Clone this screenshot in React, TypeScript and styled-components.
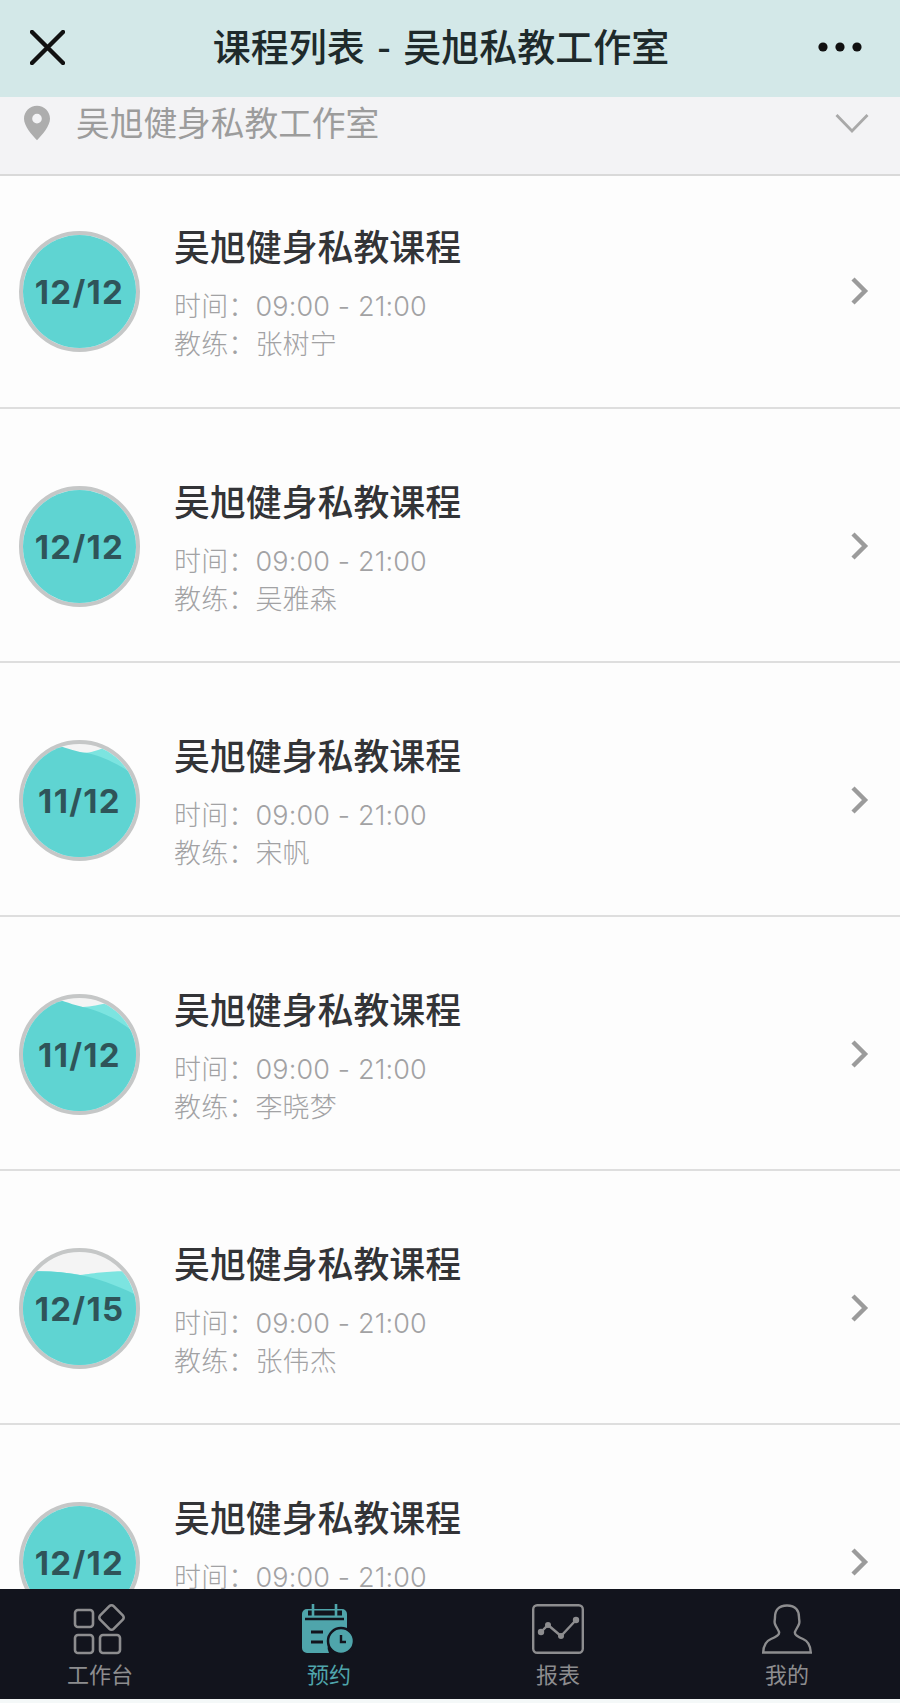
import React from "react";
import styled, { createGlobalStyle } from "styled-components";

const Global = createGlobalStyle`
  html, body { margin: 0; padding: 0; background: #fdfdfd; }
  body { font-family: "Noto Sans CJK SC", "Liberation Sans", sans-serif; }
  * { box-sizing: border-box; }
`;

const Page = styled.div`
  width: 900px;
  height: 1703px;
  display: flex;
  flex-direction: column;
  overflow: hidden;
  background: #fdfdfd;
`;

const NavBar = styled.header`
  height: 97px;
  flex: none;
  display: flex;
  align-items: center;
  justify-content: space-between;
  padding: 0 38px 3px 30px;
  background: #d3e8e8;
`;

const NavTitle = styled.h1`
  margin: 0 0 4px -1px;
  font-size: 38px;
  line-height: 50px;
  font-weight: 500;
  word-spacing: 4px;
  color: #1e2a2b;
  white-space: pre;
`;

const LocationBar = styled.div`
  height: 79px;
  flex: none;
  display: flex;
  align-items: flex-start;
  padding: 5px 31px 0 24px;
  background: #f3f3f5;
  border-bottom: 2px solid #d9d9d9;
`;

const LocationName = styled.span`
  margin-left: 26px;
  font-size: 33.7px;
  line-height: 40px;
  font-weight: 400;
  color: #9c9c9c;
`;

const LocationChevron = styled.span`
  margin-left: auto;
  margin-top: 11px;
  display: flex;
`;

const PinIcon = styled.svg`
  margin-top: 3px;
  flex: none;
`;

const List = styled.main`
  flex: 1;
  min-height: 0;
  overflow: hidden;
`;

const Row = styled.article<{ $first?: boolean }>`
  height: ${(p) => (p.$first ? 233 : 254)}px;
  display: flex;
  align-items: flex-start;
  padding: ${(p) => (p.$first ? 55 : 77)}px 31px 0 19px;
  border-bottom: 2px solid #dedede;
`;

const Gauge = styled.div`
  position: relative;
  width: 121px;
  height: 121px;
  flex: none;
  display: flex;
  align-items: center;
  justify-content: center;
  border: 4px solid #c5c7c7;
  border-radius: 50%;
  overflow: hidden;
  background: #f4f4f4;
`;

const GaugeWater = styled.svg`
  position: absolute;
  inset: 0;
  width: 113px;
  height: 113px;
`;

const GaugeLabel = styled.span`
  position: relative;
  font-family: "Inter", "Liberation Sans", sans-serif;
  font-size: 33px;
  line-height: 40px;
  font-weight: 700;
  letter-spacing: 1.3px;
  color: #2f5459;
`;

const Info = styled.div`
  margin-left: 34px;
  display: flex;
  flex-direction: column;
`;

const CourseTitle = styled.h2`
  margin: -9px 0 0;
  font-size: 35.9px;
  line-height: 46px;
  font-weight: 500;
  color: #333437;
`;

const Meta = styled.p`
  margin: 0;
  font-family: "Inter", "Noto Sans CJK SC", sans-serif;
  font-size: 27px;
  line-height: 38px;
  font-weight: 300;
  letter-spacing: 0.15px;
  color: #a2a2a4;
  white-space: pre;
`;

const MetaList = styled.div`
  margin-top: 20px;
  display: flex;
  flex-direction: column;
`;

const RowChevron = styled.span`
  margin-left: auto;
  height: 120px;
  display: flex;
  align-items: center;
`;

const TabBar = styled.nav`
  height: 110px;
  flex: none;
  display: flex;
  justify-content: space-between;
  padding: 15px 83px 0 70px;
  background: #12141d;
`;

const Tab = styled.div<{ $active?: boolean }>`
  width: 60px;
  display: flex;
  flex-direction: column;
  align-items: center;
  color: ${(p) => (p.$active ? "#4fa5ab" : "#8d8d8f")};
`;

const TabIcon = styled.svg`
  flex: none;
  overflow: visible;
`;

const TabLabel = styled.span`
  margin-top: 4px;
  font-size: 22px;
  line-height: 30px;
  white-space: nowrap;
`;

const BottomStrip = styled.div`
  height: 4px;
  flex: none;
  background: #f4f8f8;
`;

type Water = { back: string; front: string };

const FULL: Water = { back: "", front: "M0 0H113V113H0Z" };
const HIGH: Water = {
  back: "M0 0H30C42 6 52 9 60 9C68 9 74 6 81 4C92 8 102 14 113 24V113H0Z",
  front: "M0 0H32C45 5 55 8 64 9C78 12 92 18 113 32V113H0Z",
};
const HIGHER: Water = {
  back: "M0 0H30C42 6 52 9 60 9C68 9 76 6 88 5C96 9 104 16 113 26V113H0Z",
  front: "M0 0H32C45 5 55 8 64 10C78 14 94 20 113 36V113H0Z",
};
const MID: Water = {
  back: "M0 20C20 18 40 20 57 23C72 21 86 19 113 19V113H0Z",
  front: "M0 20C20 18 40 20 57 23C72 26 92 32 113 43V113H0Z",
};

const rows = [
  { count: "12/12", coach: "张树宁", water: FULL },
  { count: "12/12", coach: "吴雅森", water: FULL },
  { count: "11/12", coach: "宋帆", water: HIGH },
  { count: "11/12", coach: "李晓梦", water: HIGHER },
  { count: "12/15", coach: "张伟杰", water: MID },
  { count: "12/12", coach: "", water: FULL },
];

const Chevron = () => (
  <svg width="19" height="30" viewBox="0 0 19 30" fill="none">
    <path d="M3 3L15 15L3 27" stroke="#9b9b9b" strokeWidth="4.4" />
  </svg>
);

export default function App() {
  return (
    <Page>
      <Global />
      <NavBar>
        <svg width="35" height="35" viewBox="0 0 35 35" fill="none">
          <path d="M2 2L33 33M33 2L2 33" stroke="#111" strokeWidth="4.4" strokeLinecap="round" />
        </svg>
        <NavTitle>课程列表 - 吴旭私教工作室</NavTitle>
        <svg width="44" height="10" viewBox="0 0 44 10" fill="#111">
          <circle cx="5" cy="5" r="4.6" />
          <circle cx="22" cy="5" r="4.6" />
          <circle cx="39" cy="5" r="4.6" />
        </svg>
      </NavBar>
      <LocationBar>
        <PinIcon width="26" height="36" viewBox="0 0 27 36">
          <path
            fillRule="evenodd"
            fill="#adadad"
            d="M13.5 0C6 0 0 6 0 13.5C0 21 8 30 13.5 36C19 30 27 21 27 13.5C27 6 21 0 13.5 0ZM13.5 8.5A5 5 0 1 1 13.5 18.5A5 5 0 1 1 13.5 8.5Z"
          />
        </PinIcon>
        <LocationName>吴旭健身私教工作室</LocationName>
        <LocationChevron>
          <svg width="34" height="20" viewBox="0 0 34 20" fill="none">
            <path d="M1.5 2L17 18L32.5 2" stroke="#a9a9a9" strokeWidth="2.8" />
          </svg>
        </LocationChevron>
      </LocationBar>
      <List>
        {rows.map((r, i) => (
          <Row key={i} $first={i === 0}>
            <Gauge>
              <GaugeWater viewBox="0 0 113 113">
                {r.water.back && <path d={r.water.back} fill="#7ce4e0" />}
                <path d={r.water.front} fill="#5fd4d2" />
              </GaugeWater>
              <GaugeLabel>{r.count}</GaugeLabel>
            </Gauge>
            <Info>
              <CourseTitle>吴旭健身私教课程</CourseTitle>
              <MetaList>
                <Meta>时间：09:00 - 21:00</Meta>
                {r.coach && <Meta>教练：{r.coach}</Meta>}
              </MetaList>
            </Info>
            <RowChevron>
              <Chevron />
            </RowChevron>
          </Row>
        ))}
      </List>
      <TabBar>
        <Tab>
          <TabIcon width="48" height="50" viewBox="0 0 48 50" fill="none" stroke="currentColor" strokeWidth="2.6">
            <rect x="-1" y="6" width="18" height="17" rx="3" />
            <rect x="26" y="4" width="19" height="19" rx="3" transform="rotate(45 35.5 13.5)" />
            <rect x="-1" y="31" width="18" height="18" rx="3" />
            <rect x="24" y="31" width="20" height="18" rx="3" />
          </TabIcon>
          <TabLabel>工作台</TabLabel>
        </Tab>
        <Tab $active>
          <TabIcon width="54" height="50" viewBox="0 0 54 50">
            <path
              fill="currentColor"
              d="M5 5H40A5 5 0 0 1 45 10V27A16 16 0 0 0 27 49H5A5 5 0 0 1 0 44V10A5 5 0 0 1 5 5Z"
            />
            <path d="M3 15H42" stroke="#12141d" strokeWidth="2.4" />
            <path d="M6 9H40" stroke="#12141d" strokeWidth="5" />
            <path d="M11 0V13M34 0V13" stroke="currentColor" strokeWidth="2.6" />
            <path d="M9 28H21M9 38H21" stroke="#12141d" strokeWidth="3" />
            <circle cx="39" cy="37" r="13" fill="currentColor" stroke="#12141d" strokeWidth="2.5" />
            <path d="M39 31V38H44" stroke="#12141d" strokeWidth="2.4" fill="none" />
          </TabIcon>
          <TabLabel>预约</TabLabel>
        </Tab>
        <Tab>
          <TabIcon width="52" height="50" viewBox="0 0 52 50" fill="none" stroke="currentColor">
            <rect x="1.2" y="1.2" width="49.6" height="47.6" rx="4" strokeWidth="2.4" />
            <path d="M9 28L16 21L29 32L44 16" strokeWidth="2.4" />
            <g fill="currentColor" stroke="none">
              <circle cx="9" cy="28" r="3.2" />
              <circle cx="16" cy="21" r="3" />
              <circle cx="29" cy="32" r="3" />
              <circle cx="44" cy="16" r="3.2" />
            </g>
          </TabIcon>
          <TabLabel>报表</TabLabel>
        </Tab>
        <Tab>
          <TabIcon width="50" height="50" viewBox="0 0 50 50" fill="none" stroke="currentColor" strokeWidth="2.4">
            <path d="M25 1.5C16 1.5 13 7 13 13C13 16 12 18 13 20C14 23 16 25 17 28C18 31 14 33 9 35C4 37 1.5 42 1.2 48.5H48.8C48.5 42 46 37 41 35C36 33 32 31 33 28C34 25 36 23 37 20C38 18 37 16 37 13C37 7 34 1.5 25 1.5Z" />
          </TabIcon>
          <TabLabel>我的</TabLabel>
        </Tab>
      </TabBar>
      <BottomStrip />
    </Page>
  );
}
